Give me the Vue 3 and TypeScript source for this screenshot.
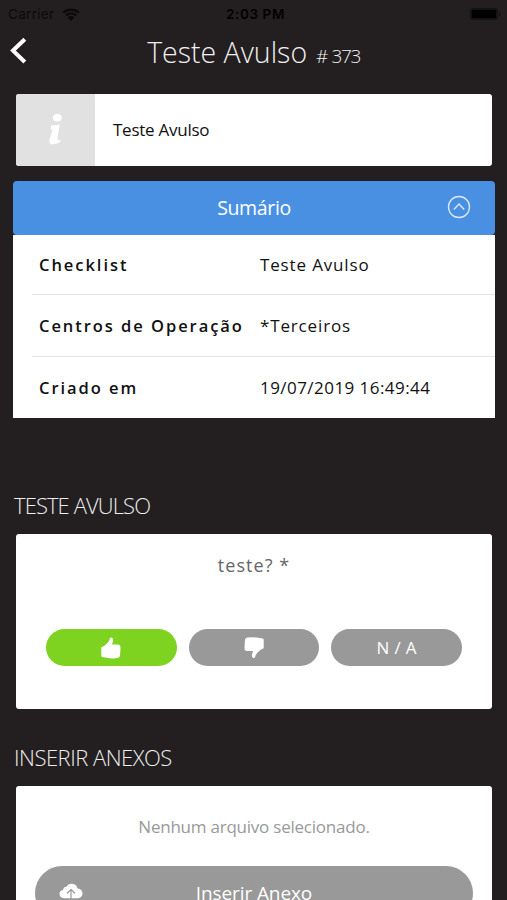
<script setup lang="ts">
interface SummaryRow {
  label: string
  value: string
  numeric?: boolean
}

const rows: SummaryRow[] = [
  { label: 'Checklist', value: 'Teste Avulso' },
  { label: 'Centros de Operação', value: '*Terceiros' },
  { label: 'Criado em', value: '19/07/2019 16:49:44', numeric: true },
]
</script>

<template>
  <div class="screen">
    <div class="status">
      <div class="carrier">
        <span>Carrier</span>
        <svg class="wifi" viewBox="0 0 18 13">
          <path d="M1.2 4.7A11.2 11.2 0 0 1 16.8 4.7M3.9 7.5A7.3 7.3 0 0 1 14.1 7.5" fill="none" stroke="currentColor" stroke-width="2.2" />
          <path d="M9 13 5.6 9.5A4.8 4.8 0 0 1 12.4 9.5Z" fill="currentColor" />
        </svg>
      </div>
      <span class="clock">2:03 PM</span>
      <svg class="battery" viewBox="0 0 32 14">
        <rect x="1" y="1" width="28" height="12" rx="3" fill="#151214" />
        <rect x="3" y="3" width="24" height="8" rx="1" fill="#000" />
        <path d="M30.500 5v4" stroke="#151214" stroke-width="1.500" />
      </svg>
    </div>

    <header class="header">
      <svg class="back" viewBox="0 0 18 28">
        <path d="M15.800 2.200 4 13.600 15.800 25" fill="none" stroke="#fff" stroke-width="4" />
      </svg>
      <h1 class="title"><span class="name">Teste Avulso</span><span class="number"># 373</span></h1>
    </header>

    <section class="info">
      <div class="info-icon">
        <svg viewBox="0 0 16 32">
          <ellipse cx="9.300" cy="4.700" rx="4.400" ry="3.700" />
          <path d="M3.300 12.200Q7.500 12.700 11.700 11.600L9.500 25.500Q9.300 28.300 13 26.800 12.500 29.700 8.500 30.600 4.300 32.100 2 30.400 .900 28.800 1.800 25.700L4.100 18.300Q4.500 16.200 2.600 16.300Z" />
        </svg>
      </div>
      <span class="info-text">Teste Avulso</span>
    </section>

    <section class="summary">
      <div class="summary-head">
        <span class="summary-title">Sumário</span>
        <svg class="toggle" viewBox="0 0 24 24">
          <circle cx="12" cy="12" r="10.500" />
          <path d="M6.800 14.500 12 9l5.200 5.500" />
        </svg>
      </div>
      <dl class="rows">
        <div v-for="row in rows" :key="row.label" class="row">
          <dt>{{ row.label }}</dt>
          <dd :class="{ numeric: row.numeric }">{{ row.value }}</dd>
        </div>
      </dl>
    </section>

    <h2 class="heading first">TESTE AVULSO</h2>
    <section class="card question">
      <p class="prompt">teste? *</p>
      <div class="answers">
        <button class="answer yes" type="button">
          <svg viewBox="0 0 20 22">
            <path d="M.300 10.200Q3.500 9.300 6.400 6 8.700 3.500 9 1.200 9.400.300 10.600.500 12.300 1 12.200 3.500L11 7.600Q16 7.300 18.300 7.800 19.800 8.400 19.500 11.500L19 18.600Q18.700 20.700 16.500 21 11 22 6 20.700L1.300 19.900Q.300 19.700.300 18.700Z" />
          </svg>
        </button>
        <button class="answer" type="button">
          <svg viewBox="0 0 20 22">
            <path d="M19.700 11.300Q16.500 12.200 13.600 15.500 11.300 18 11 20.300 10.600 21.200 9.400 21 7.700 20.500 7.800 18L9 13.900Q4 14.200 1.700 13.700.200 13.100.500 10L1 2.900Q1.300.800 3.500.500 9-.200 14 .800L18.700 1.600Q19.700 1.800 19.700 2.800Z" />
          </svg>
        </button>
        <button class="answer" type="button"><span class="na">N / A</span></button>
      </div>
    </section>

    <h2 class="heading second">INSERIR ANEXOS</h2>
    <section class="card files">
      <p class="empty">Nenhum arquivo selecionado.</p>
      <button class="upload" type="button">
        <svg class="cloud" viewBox="0 0 24 18">
          <path d="M5 15.300Q.500 14.800.500 10.800.500 7.500 4.100 7 4.300 3.800 7.500 3.700 9 .700 12.500.700 17.500.800 18.400 5.200 23.500 6.200 23.500 10.600 23.200 14.900 19 15.300Z" fill="#fff" />
          <path d="M12 17.500V6.800M8 10.300 12 6.500l4 3.800" fill="none" stroke="#999" stroke-width="1.200" />
        </svg>
        <span class="upload-text">Inserir Anexo</span>
      </button>
    </section>
  </div>
</template>

<style>
body {
  background: #231f20;
}
</style>

<style scoped>
.screen {
  box-sizing: border-box;
  width: 100%;
  height: 900px;
  overflow: hidden;
  background: #231f20;
  font-family: "Open Sans", "Noto Sans", sans-serif;
  color: #111;
}

h1, h2, p, dl, dt, dd {
  margin: 0;
  font-weight: 400;
}

span, h2, p, dt, dd {
  white-space: nowrap;
}

button {
  border: 0;
  padding: 0;
  font: inherit;
  color: #fff;
}

svg {
  display: block;
}

.status {
  display: grid;
  grid-template-columns: 1fr auto 1fr;
  align-items: center;
  height: 28px;
  padding: 0 8px;
  font-family: Inter, sans-serif;
  font-size: 13.500px;
  color: #000;
}

.carrier {
  display: flex;
  align-items: center;
  gap: 8px;
  color: #0b090a;
  letter-spacing: 0.300px;
}

.wifi {
  width: 18px;
  height: 13px;
}

.clock {
  padding-left: 4px;
  font-weight: 600;
  letter-spacing: 0.600px;
}

.battery {
  width: 32px;
  height: 14px;
  justify-self: end;
  margin-right: -2px;
}

.header {
  display: grid;
  grid-template-columns: 30px 1fr 30px;
  align-items: center;
  height: 48px;
  padding: 0 9px;
}

.back {
  width: 18px;
  height: 28px;
  margin-bottom: 2px;
}

.title {
  display: flex;
  justify-content: center;
  align-items: baseline;
  gap: 9px;
  color: #f0f0f0;
}

.name {
  font-size: 28.500px;
  font-weight: 300;
  line-height: 46px;
}

.number {
  font-size: 19px;
  font-weight: 300;
  letter-spacing: -1.400px;
  word-spacing: 1px;
}

.info {
  display: flex;
  height: 72px;
  margin: 18px 15px 0 16px;
  border-radius: 3px;
  overflow: hidden;
  background: #fff;
}

.info-icon {
  display: flex;
  align-items: center;
  justify-content: center;
  width: 79px;
  background: #e1e1e1;
}

.info-icon svg {
  width: 16px;
  height: 32px;
  margin-bottom: 3px;
  fill: #fff;
}

.info-text {
  padding-left: 18px;
  font-size: 17px;
  line-height: 72px;
  letter-spacing: -0.250px;
}

.summary {
  margin: 15px 12px 0 13px;
}

.summary-head {
  display: grid;
  grid-template-columns: 1fr auto 1fr;
  align-items: center;
  height: 54px;
  border-radius: 4px;
  background: #4a90e2;
  color: #fff;
}

.summary-title {
  grid-column: 2;
  font-size: 19.500px;
  line-height: 28px;
  letter-spacing: -0.350px;
  margin-bottom: 1px;
}

.toggle {
  width: 24px;
  height: 24px;
  justify-self: end;
  margin: 0 24px 3px 0;
  fill: none;
  stroke: #dceafa;
  stroke-width: 1.300;
}

.rows {
  height: 183px;
  padding-left: 19px;
  background: #fff;
}

.row {
  display: grid;
  grid-template-columns: 221px 1fr;
  box-sizing: border-box;
  height: 61px;
  padding-left: 7px;
  border-bottom: 1px solid #e4e4e4;
  font-size: 17px;
  line-height: 62px;
}

.row:first-child {
  height: 60px;
  line-height: 60px;
}

.row:nth-child(2) {
  height: 62px;
}

.row:last-child {
  border-bottom: 0;
}

.row dt {
  font-weight: 600;
  font-size: 16.500px;
  letter-spacing: 1.950px;
}

.row dd {
  letter-spacing: 0.850px;
}

.row .numeric {
  letter-spacing: 0.450px;
}

.heading {
  margin-left: 14px;
  font-size: 22px;
  font-weight: 300;
  line-height: 30px;
  color: #eee;
}

.first {
  margin-top: 72px;
  letter-spacing: -0.900px;
}

.second {
  margin-top: 33px;
  letter-spacing: -0.500px;
}

.card {
  box-sizing: border-box;
  margin: 14px 15px 0 16px;
  border-radius: 3px;
  background: #fff;
}

.question {
  height: 175px;
  padding: 17px 30px 0;
}

.prompt {
  text-align: center;
  font-size: 18px;
  line-height: 28px;
  letter-spacing: 1.050px;
  color: #666;
}

.answers {
  display: grid;
  grid-template-columns: repeat(3, 1fr);
  gap: 12px;
  margin-top: 50px;
}

.answer {
  display: flex;
  align-items: center;
  justify-content: center;
  height: 37px;
  border-radius: 19px;
  background: #999;
}

.answer svg {
  width: 20px;
  height: 22px;
  fill: #fff;
}

.yes {
  background: #7ed321;
}

.na {
  font-size: 17px;
  letter-spacing: 0.300px;
}

.files {
  height: 180px;
  padding: 27px 19px 0;
}

.empty {
  text-align: center;
  font-size: 17px;
  line-height: 28px;
  letter-spacing: -0.230px;
  color: #999;
}

.upload {
  display: grid;
  grid-template-columns: 1fr auto 1fr;
  align-items: center;
  width: 100%;
  height: 54px;
  margin-top: 25px;
  border-radius: 27px;
  background: #999;
}

.cloud {
  width: 24px;
  height: 18px;
  margin: 0 0 3px 24px;
}

.upload-text {
  font-size: 19px;
  letter-spacing: -0.100px;
}
</style>
